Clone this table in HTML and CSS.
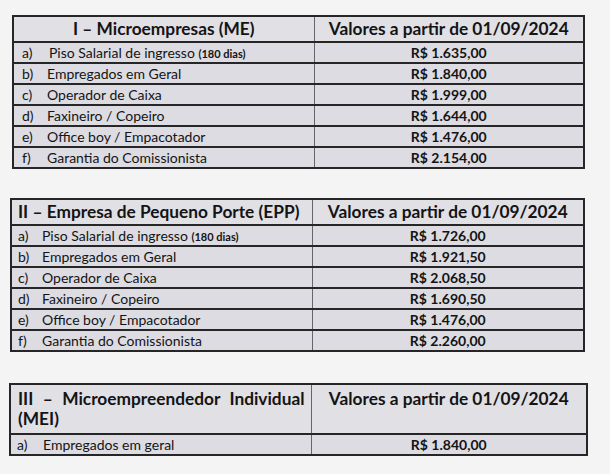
FILE: index.html
```html
<!DOCTYPE html>
<html lang="pt-BR">
<head>
<meta charset="utf-8">
<title>Pisos salariais</title>
<link rel="stylesheet" href="styles.css">
</head>
<body>
<main class="page">
  <table class="grid grid-1">
    <colgroup><col class="c-label"><col class="c-value"></colgroup>
    <tr class="head"><th class="h-center">I – Microempresas (ME)</th><th>Valores a partir de 01/09/2024</th></tr>
    <tr><td><span class="k">a)</span><span class="t t-a">Piso Salarial de ingresso <b class="small">(180 dias)</b></span></td><td class="v">R$ 1.635,00</td></tr>
    <tr><td><span class="k">b)</span><span class="t">Empregados em Geral</span></td><td class="v">R$ 1.840,00</td></tr>
    <tr><td><span class="k">c)</span><span class="t">Operador de Caixa</span></td><td class="v">R$ 1.999,00</td></tr>
    <tr><td><span class="k">d)</span><span class="t">Faxineiro / Copeiro</span></td><td class="v">R$ 1.644,00</td></tr>
    <tr><td><span class="k">e)</span><span class="t">Office boy / Empacotador</span></td><td class="v">R$ 1.476,00</td></tr>
    <tr><td><span class="k">f)</span><span class="t">Garantia do Comissionista</span></td><td class="v">R$ 2.154,00</td></tr>
  </table>

  <table class="grid grid-2">
    <colgroup><col class="c-label"><col class="c-value"></colgroup>
    <tr class="head"><th class="h-left">II – Empresa de Pequeno Porte (EPP)</th><th>Valores a partir de 01/09/2024</th></tr>
    <tr><td><span class="k">a)</span><span class="t">Piso Salarial de ingresso <b class="small">(180 dias)</b></span></td><td class="v">R$ 1.726,00</td></tr>
    <tr><td><span class="k">b)</span><span class="t">Empregados em Geral</span></td><td class="v">R$ 1.921,50</td></tr>
    <tr><td><span class="k">c)</span><span class="t">Operador de Caixa</span></td><td class="v">R$ 2.068,50</td></tr>
    <tr><td><span class="k">d)</span><span class="t">Faxineiro / Copeiro</span></td><td class="v">R$ 1.690,50</td></tr>
    <tr><td><span class="k">e)</span><span class="t">Office boy / Empacotador</span></td><td class="v">R$ 1.476,00</td></tr>
    <tr><td><span class="k">f)</span><span class="t">Garantia do Comissionista</span></td><td class="v">R$ 2.260,00</td></tr>
  </table>

  <table class="grid grid-3">
    <colgroup><col class="c-label"><col class="c-value"></colgroup>
    <tr class="head head-tall"><th class="h-just">III – Microempreendedor Individual (MEI)</th><th class="h-top">Valores a partir de 01/09/2024</th></tr>
    <tr><td><span class="k">a)</span><span class="t">Empregados em geral</span></td><td class="v">R$ 1.840,00</td></tr>
  </table>
</main>
</body>
</html>
```

FILE: styles.css
```css
html, body {
  margin: 0;
  padding: 0;
  background: #f4f4f5;
}

.page {
  display: flex;
  flex-direction: column;
  padding-top: 15px;
  font-family: Lato, "Open Sans", sans-serif;
  color: #141414;
}

.grid {
  border-collapse: collapse;
  table-layout: fixed;
  background: #dcdce2;
  border: 2px solid #262626;
}

.grid-1 { width: 573px; margin-left: 12px; }
.grid-2 { width: 575px; margin-left: 10px; margin-top: 29px; }
.grid-3 { width: 579px; margin-left: 9px; margin-top: 31px; }

.c-label { width: 301px; }

.grid th,
.grid td {
  padding: 0;
  border-top: 2px solid #262626;
  border-left: 1px solid #666;
}

.grid th:first-child,
.grid td:first-child {
  border-left: none;
}

.head th {
  height: 24px;
  font-size: 17.3px;
  font-weight: 700;
  text-align: center;
  line-height: 20px;
  background: #e0e0e5;
}

.head .h-left {
  text-align: left;
  padding-left: 6px;
}

.head-tall th {
  height: 44px;
  vertical-align: top;
  padding-top: 4px;
}

.head .h-just {
  text-align: justify;
  text-align-last: left;
  padding: 4px 6px 0 7px;
  word-spacing: 2px;
}

.grid td {
  height: 19px;
  font-size: 14px;
  line-height: 17px;
  white-space: nowrap;
}

.k {
  display: inline-block;
  width: 25px;
  padding-left: 8px;
  box-sizing: content-box;
}

.grid-2 .k { padding-left: 6px; width: 24px; }
.grid-3 .k { padding-left: 6px; width: 26px; }

.t-a { margin-left: 2px; }

.small {
  font-size: 11px;
  font-weight: 700;
}

.v {
  text-align: center;
  font-weight: 700;
  font-size: 13.5px;
}
```
